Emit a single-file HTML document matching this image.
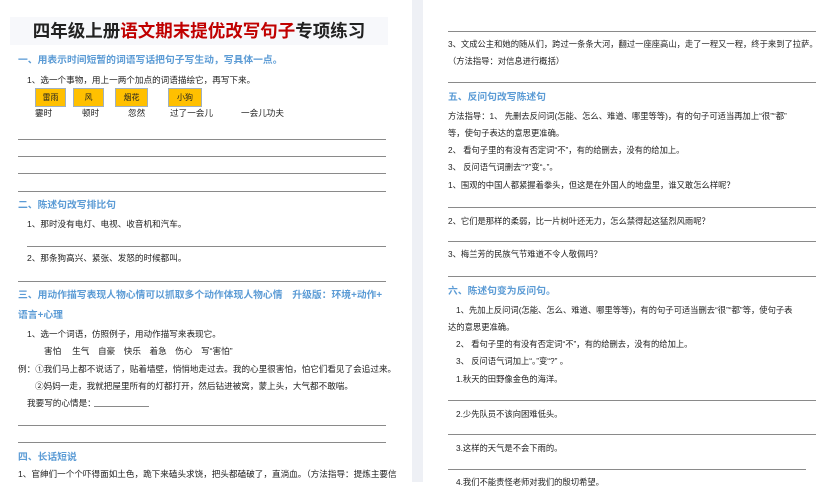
<!DOCTYPE html>
<html><head><meta charset="utf-8"><style>
*{margin:0;padding:0;box-sizing:border-box}
body{width:833px;height:482px;overflow:hidden;background:#fff;position:relative;font-family:"Liberation Sans","Noto Sans CJK SC",sans-serif;color:#222}
.t{position:absolute;font-size:8.6px;line-height:12px;white-space:nowrap}
.r{font-size:8.3px}
.h{position:absolute;font-size:9.8px;line-height:13px;font-weight:bold;color:#5b9bd5;white-space:nowrap}
.l{position:absolute;height:1px;background:#8a8a8a}
.b{position:absolute;height:19px;top:88px;background:#ffc000;border:1px solid #9fb0c0;font-size:8px;line-height:17px;text-align:center}
</style></head><body>
<div style="position:absolute;left:412px;top:0;width:11px;height:482px;background:#eef0f5"></div>
<div style="position:absolute;left:10px;top:17px;width:378px;height:28px;background:#f7f8fb"></div>
<div style="position:absolute;left:10px;top:19px;width:378px;text-align:center;font-size:17.5px;line-height:24px;font-weight:bold;white-space:nowrap">四年级上册<span style="color:#c00000">语文期末提优改写句子</span>专项练习</div>
<div class="h" style="left:18px;top:54px">一、用表示时间短暂的词语写话把句子写生动，写具体一点。</div>
<div class="t" style="left:27px;top:74px">1、选一个事物，用上一两个加点的词语描绘它，再写下来。</div>
<div class="b" style="left:35px;width:31px">雷雨</div>
<div class="b" style="left:73px;width:31px">风</div>
<div class="b" style="left:115px;width:33px">烟花</div>
<div class="b" style="left:168px;width:34px">小狗</div>
<div class="t" style="left:35px;top:107px">霎时</div>
<div class="t" style="left:82px;top:107px">顿时</div>
<div class="t" style="left:128px;top:107px">忽然</div>
<div class="t" style="left:170px;top:107px">过了一会儿</div>
<div class="t" style="left:241px;top:107px">一会儿功夫</div>
<div class="l" style="left:18px;width:368px;top:139px"></div>
<div class="l" style="left:18px;width:368px;top:156px"></div>
<div class="l" style="left:18px;width:368px;top:173px"></div>
<div class="l" style="left:18px;width:368px;top:191px"></div>
<div class="h" style="left:18px;top:199px">二、陈述句改写排比句</div>
<div class="t" style="left:27px;top:218px">1、那时没有电灯、电视、收音机和汽车。</div>
<div class="l" style="left:27px;width:359px;top:246px"></div>
<div class="t" style="left:27px;top:252px">2、那条狗高兴、紧张、发怒的时候都叫。</div>
<div class="l" style="left:18px;width:368px;top:281px"></div>
<div class="h" style="left:18px;top:289px">三、用动作描写表现人物心情可以抓取多个动作体现人物心情　升级版：环境+动作+</div>
<div class="h" style="left:18px;top:309px">语言+心理</div>
<div class="t" style="left:27px;top:328px">1、选一个词语，仿照例子，用动作描写来表现它。</div>
<div class="t" style="left:44px;top:345px">害怕　 生气　自豪　快乐　着急　伤心　写“害怕”</div>
<div class="t" style="left:18px;top:363px">例：①我们马上都不说话了，贴着墙壁，悄悄地走过去。我的心里很害怕，怕它们看见了会追过来。</div>
<div class="t" style="left:35px;top:380px">②妈妈一走，我就把屋里所有的灯都打开，然后钻进被窝，蒙上头，大气都不敢喘。</div>
<div class="t" style="left:27px;top:397px">我要写的心情是：</div>
<div class="l" style="left:94px;width:55px;top:406px"></div>
<div class="l" style="left:18px;width:368px;top:425px"></div>
<div class="l" style="left:18px;width:368px;top:442px"></div>
<div class="h" style="left:18px;top:451px">四、长话短说</div>
<div class="t" style="left:18px;top:468px">1、官绅们一个个吓得面如土色，跪下来磕头求饶，把头都磕破了，直淌血。（方法指导：提炼主要信</div>

<div class="l" style="left:448px;width:368px;top:31px"></div>
<div class="t r" style="left:448px;top:38px">3、文成公主和她的随从们，跨过一条条大河，翻过一座座高山，走了一程又一程，终于来到了拉萨。</div>
<div class="t r" style="left:448px;top:55px">（方法指导：对信息进行概括）</div>
<div class="l" style="left:448px;width:368px;top:82px"></div>
<div class="h" style="left:448px;top:91px">五、反问句改写陈述句</div>
<div class="t r" style="left:448px;top:110px">方法指导：1、 先删去反问词(怎能、怎么、难道、哪里等等)，有的句子可适当再加上“很”“都”</div>
<div class="t r" style="left:448px;top:127px">等，使句子表达的意思更准确。</div>
<div class="t r" style="left:448px;top:144px">2、 看句子里的有没有否定词“不”，有的给删去，没有的给加上。</div>
<div class="t r" style="left:448px;top:161px">3、 反问语气词删去“?”变“。”。</div>
<div class="t r" style="left:448px;top:179px">1、围观的中国人都紧握着拳头，但这是在外国人的地盘里，谁又敢怎么样呢？</div>
<div class="l" style="left:448px;width:368px;top:207px"></div>
<div class="t r" style="left:448px;top:215px">2、它们是那样的柔弱，比一片树叶还无力，怎么禁得起这猛烈风雨呢？</div>
<div class="l" style="left:448px;width:368px;top:241px"></div>
<div class="t r" style="left:448px;top:248px">3、梅兰芳的民族气节难道不令人敬佩吗？</div>
<div class="l" style="left:448px;width:368px;top:276px"></div>
<div class="h" style="left:448px;top:285px">六、陈述句变为反问句。</div>
<div class="t r" style="left:456px;top:304px">1、先加上反问词(怎能、怎么、难道、哪里等等)，有的句子可适当删去“很”“都”等，使句子表</div>
<div class="t r" style="left:448px;top:321px">达的意思更准确。</div>
<div class="t r" style="left:456px;top:338px">2、 看句子里的有没有否定词“不”，有的给删去，没有的给加上。</div>
<div class="t r" style="left:456px;top:355px">3、 反问语气词加上“。”变“?” 。</div>
<div class="t r" style="left:456px;top:373px">1.秋天的田野像金色的海洋。</div>
<div class="l" style="left:448px;width:368px;top:400px"></div>
<div class="t r" style="left:456px;top:408px">2.少先队员不该向困难低头。</div>
<div class="l" style="left:448px;width:368px;top:434px"></div>
<div class="t r" style="left:456px;top:442px">3.这样的天气是不会下雨的。</div>
<div class="l" style="left:448px;width:358px;top:469px"></div>
<div class="t r" style="left:456px;top:476px">4.我们不能责怪老师对我们的殷切希望。</div>
</body></html>
